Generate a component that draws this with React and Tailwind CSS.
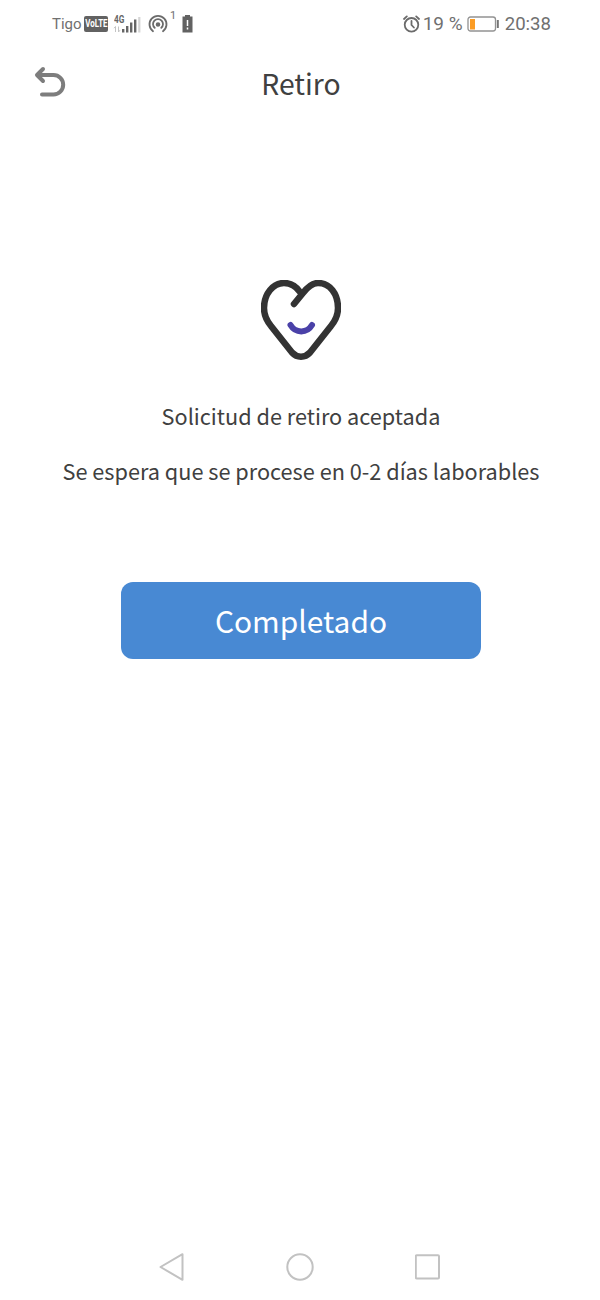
const StatusBar = () => (
  <div className="flex h-12 items-center justify-between pl-[52px] pr-[49px] font-['Roboto',sans-serif] text-[#707070]">
    <div className="flex items-center">
      <span className="text-[15px] leading-5 w-[32px]">Tigo</span>
      <span className="flex h-4 w-6 items-center justify-center rounded-[2px] bg-[#626262] text-white">
        <span className="scale-x-[0.72] text-[11px] font-bold leading-4">VoLTE</span>
      </span>
      <div className="ml-[6px] flex h-6 w-[29px] flex-col">
        <span className="h-[12px] w-4 origin-left scale-x-[0.75] text-[11px] font-bold leading-[15px] text-[#666]">4G</span>
        <svg className="-mt-[7px] -ml-px" width="30" height="16" viewBox="0 0 30 16" fill="#666">
          <path d="M2.5 9.5v5.5M1 11.2l1.5-1.7M5.5 9.5v5.5M5.5 15L7 13.2" stroke="#c4c4c4" fill="none" />
          <rect x="9" y="12" width="2.4" height="3.5" />
          <rect x="13" y="9" width="2.4" height="6.5" />
          <rect x="17" y="5.5" width="2.4" height="10" />
          <rect x="21" y="2.5" width="2.4" height="13" />
          <rect x="25.2" y="0" width="2.2" height="15.5" fill="#d5d5d5" />
        </svg>
      </div>
      <svg className="ml-[5px]" width="20" height="20" viewBox="0 0 20 20" fill="none" stroke="#6b6b6b" strokeWidth="1.8" strokeLinecap="round">
        <path d="M5 17.2a8.5 8.5 0 1 1 10 0" />
        <path d="M6.7 13.8a5 5 0 1 1 6.6 0" />
        <circle cx="10" cy="10.5" r="1.4" fill="#6b6b6b" />
      </svg>
      <span className="-mt-[16px] ml-[2px] w-[6px] text-[11px]">1</span>
      <svg className="ml-[6px]" width="12" height="18" viewBox="0 0 12 18">
        <path d="M3 0h5v1.5h2.5v16H.5v-16H3z" fill="#626262" />
        <path d="M5.5 5v6M5.5 12.5v2" stroke="#fff" strokeWidth="1.5" />
      </svg>
    </div>
    <div className="flex items-center">
      <svg width="18" height="18" viewBox="0 0 18 18" fill="none" stroke="#6b6b6b" strokeWidth="1.8" strokeLinecap="round">
        <circle cx="8.5" cy="9.8" r="6.8" />
        <path d="M8.5 6v4l2.4 2.5M1 4l2.8-2.6M16 4l-2.8-2.6" />
      </svg>
      <span className="ml-[2px] w-[44px] whitespace-nowrap text-[19px]">19 %</span>
      <svg width="33" height="16" viewBox="0 0 33 16">
        <rect x="1" y="1" width="27.5" height="14" rx="2.5" fill="none" stroke="#929292" strokeWidth="1.3" />
        <rect x="3" y="3" width="5" height="10.5" fill="#fb9c24" />
        <path d="M30.8 4v8" stroke="#757575" strokeWidth="2" />
      </svg>
      <span className="ml-[5px] mt-px text-[18.6px]">20:38</span>
    </div>
  </div>
);

const HeartIcon = () => (
  <svg width="80" height="80" viewBox="0 0 80 80" fill="none" strokeWidth="6.5" strokeLinecap="round" strokeLinejoin="round">
    <path
      d="M33 24L42 13C47 6.5 51 3 57 3C69 3 77 14 77 28C77 35 75 40 70 46L49 72.5C44 78 36 78 31 72.5L10 46C5 40 3 35 3 28C3 14 12 3 23 3C30 3 35 6 39 12"
      stroke="#333"
    />
    <path d="M29.5 45C34.5 53.5 46 53.5 51 45" stroke="#4a41a8" strokeWidth="6" />
  </svg>
);

const NavigationBar = () => (
  <div className="flex h-[66px] items-center justify-between px-[159px]">
    <svg width="26" height="30" viewBox="0 0 26 30" fill="none" stroke="#c2c2c2" strokeWidth="2" strokeLinejoin="round">
      <path d="M1.5 15L23.5 2.2V27.8z" />
    </svg>
    <svg width="28" height="28" viewBox="0 0 28 28" fill="none" stroke="#c2c2c2" strokeWidth="2">
      <circle cx="14" cy="14" r="12.7" />
    </svg>
    <svg width="26" height="26" viewBox="0 0 26 26" fill="none" stroke="#c2c2c2" strokeWidth="2">
      <rect x="0.8" y="1.2" width="23.2" height="23.2" rx="1" />
    </svg>
  </div>
);

const App = () => {
  return (
    <div className="flex h-[1300px] w-[600px] flex-col bg-white font-['Noto_Sans_CJK_SC',sans-serif] text-[#404040]">
      <StatusBar />

      <header className="grid h-[72px] grid-cols-[1fr_auto_1fr] items-center pl-[34px] pr-[32px]">
        <button aria-label="Volver">
          <svg className="-mt-1" width="32" height="32" viewBox="0 0 32 32" fill="none" stroke="#7d7d7d" strokeWidth="4" strokeLinecap="round" strokeLinejoin="round">
            <path d="M9 3L3 9L9 15M3.5 9H19.5A9.7 9.7 0 0 1 19.5 28.4H8" />
          </svg>
        </button>
        <h1 className="-mt-[3px] text-[28.3px] leading-[40px]">Retiro</h1>
      </header>

      <main className="flex flex-1 flex-col items-center pl-[2px] pt-[160px]">
        <HeartIcon />
        <p className="mt-[38px] text-[21.7px] leading-9">Solicitud de retiro aceptada</p>
        <p className="mt-[19px] text-[21.7px] leading-9">Se espera que se procese en 0-2 días laborables</p>
        <button className="mt-[93px] h-[77px] w-[360px] rounded-xl bg-[#4889d3] pb-px text-[29.9px] text-white">
          Completado
        </button>
      </main>

      <NavigationBar />
    </div>
  );
};

export default App;
